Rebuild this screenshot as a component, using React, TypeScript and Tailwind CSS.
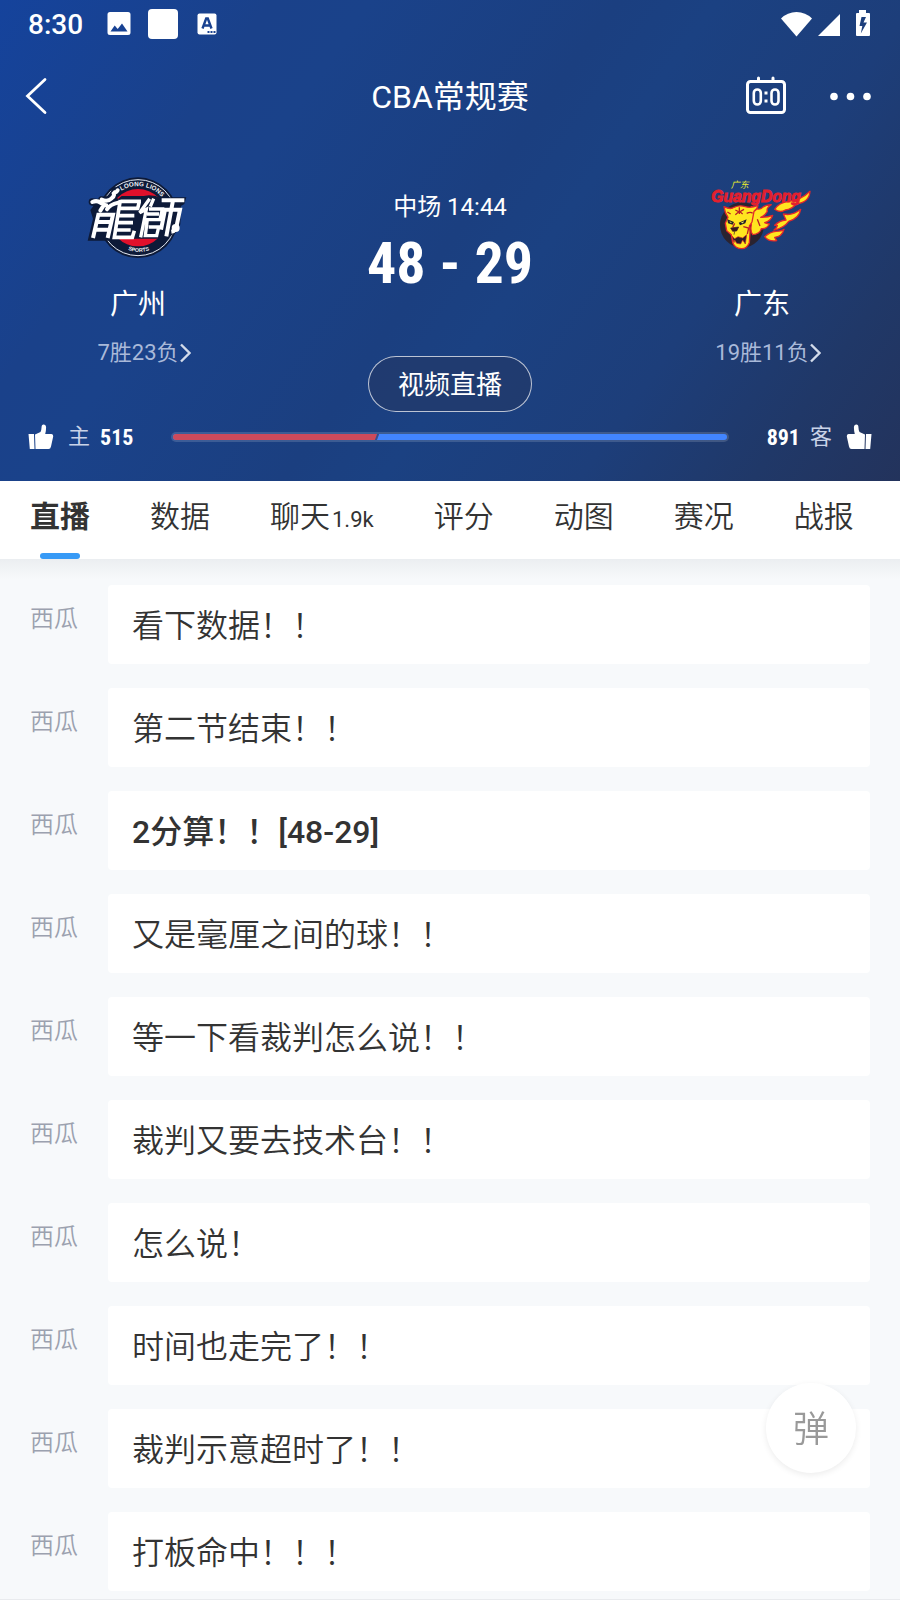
import { useState } from "react";

const tabs = [
  { label: "直播" },
  { label: "数据" },
  { label: "聊天", count: "1.9k" },
  { label: "评分" },
  { label: "动图" },
  { label: "赛况" },
  { label: "战报" },
];

const messages = [
  { id: 1, author: "西瓜", text: "看下数据！！" },
  { id: 2, author: "西瓜", text: "第二节结束！！" },
  { id: 3, author: "西瓜", text: "2分算！！[48-29]", highlight: true },
  { id: 4, author: "西瓜", text: "又是毫厘之间的球！！" },
  { id: 5, author: "西瓜", text: "等一下看裁判怎么说！！" },
  { id: 6, author: "西瓜", text: "裁判又要去技术台！！" },
  { id: 7, author: "西瓜", text: "怎么说！" },
  { id: 8, author: "西瓜", text: "时间也走完了！！" },
  { id: 9, author: "西瓜", text: "裁判示意超时了！！" },
  { id: 10, author: "西瓜", text: "打板命中！！！" },
];

const votes = { home: 515, away: 891 };

function StatusBar() {
  return (
    <div className="flex h-12 items-center justify-between pr-[30px] pl-7">
      <div className="flex items-center">
        <span className="pt-0.5 text-[28px] leading-8 font-medium">8:30</span>
        <svg className="ml-6 size-6" viewBox="0 0 24 24" fill="currentColor">
          <path
            fillRule="evenodd"
            d="M3 0h18a2.500 2.500 0 0 1 2.500 2.500v18a2.500 2.500 0 0 1-2.500 2.500H3a2.500 2.500 0 0 1-2.500-2.500v-18A2.500 2.500 0 0 1 3 0zM3.500 19.500h17l-5.500-8-4.300 5.500-3-3.500z"
          />
        </svg>
        <span className="ml-[17px] size-[30px] rounded bg-white" />
        <svg className="ml-[19px] h-[22px] w-5" viewBox="0 0 20 22">
          <rect x="0.500" y="0.500" width="19" height="21" rx="2" fill="#fff" />
          <path
            d="M5.500 15.500 9.200 5.500h1.600l3.700 10M7 12.500h6"
            fill="none"
            stroke="#1a4290"
            strokeWidth="2.400"
          />
          <path d="M10.500 18h2v2h-2zM13.500 18h2v2h-2zM16.500 18h2v2h-2z" fill="#1a4290" />
        </svg>
      </div>

      <svg className="h-7 w-[90px]" viewBox="0 0 90 28" fill="currentColor">
        <path d="M16.500 26.500 1 8.500Q7.500 2 16.500 2T32 8.500z" />
        <path d="M60 4v22H38z" />
        <path
          fillRule="evenodd"
          d="M79 0h7v3h3q1 0 1 1v21q0 1-1 1H77q-1 0-1-1V4q0-1 1-1h2zM81.500 7 79.500 16h2.800L80.800 23.500 87 12.500h-3.500L86 7z"
        />
      </svg>
    </div>
  );
}

function NavBar() {
  return (
    <div className="grid h-24 grid-cols-[1fr_auto_1fr] items-center px-6">
      <button type="button" aria-label="返回" className="size-10 justify-self-start">
        <svg viewBox="0 0 40 40" fill="none" stroke="currentColor" strokeWidth="2.800" strokeLinecap="round">
          <path d="M21 3.500 3.500 20 21 36.500" />
        </svg>
      </button>
      <h1 className="pt-0.5 text-[32px] leading-10">CBA常规赛</h1>
      <div className="flex items-center gap-10 justify-self-end">
        <button type="button" aria-label="比分" className="h-10 w-[42px]">
          <svg viewBox="1 0 42 40" fill="none" stroke="currentColor" strokeWidth="2.600">
            <rect x="2.500" y="5.500" width="37" height="31" rx="3" strokeWidth="3" />
            <path d="M13.500 2v3M28 2v3" strokeWidth="3" strokeLinecap="round" />
            <rect x="8.800" y="13.500" width="7" height="15" rx="3.500" />
            <rect x="26.500" y="13.500" width="7" height="15" rx="3.500" />
            <path d="M19.500 17h3M19.500 25h3" strokeWidth="3" />
          </svg>
        </button>
        <button type="button" aria-label="更多" className="h-10 w-12">
          <svg viewBox="0 0 48 40" fill="currentColor">
            <circle cx="6" cy="20.500" r="3.800" />
            <circle cx="22.500" cy="20.500" r="3.800" />
            <circle cx="39" cy="20.500" r="3.800" />
          </svg>
        </button>
      </div>
    </div>
  );
}

function LoongLionsLogo() {
  return (
    <svg className="h-[110px] w-[140px]" viewBox="-5 2 420 330" role="img" aria-label="Loong Lions">
      <path id="ring-title" d="M155 94A94 94 0 0 1 286 128" fill="none" />
      <path id="ring-foot" d="M175 271Q207 285 246 271" fill="none" />
      <circle cx="205" cy="175" r="121" fill="#0d1a38" />
      <circle cx="205" cy="175" r="114" fill="none" stroke="#e8ecf4" strokeWidth="3" />
      <circle cx="205" cy="175" r="86" fill="#e0102b" />
      <text fill="#f2f4f8" fontSize="19" fontWeight="700" fontFamily="Liberation Sans">
        <textPath href="#ring-title">LOONG LIONS</textPath>
      </text>
      <text fill="#f2f4f8" fontSize="16" fontWeight="700" fontFamily="Liberation Sans">
        <textPath href="#ring-foot">SPORTS</textPath>
      </text>
      <path
        d="M92 112h40l14 6 10-8h66l16-2 20 2 8 4h84l-6 20-10 6-2 54q-4 24-22 30l-16 14H132l-4 6H54l16-66-8-26z"
        fill="#0d1a38"
      />
      <g fill="none" stroke="#0d1a38" strokeWidth="22" strokeLinecap="round">
        <path d="M68 128l36 4M96 122q30 6 40-28" />
      </g>
      <g fill="none" stroke="#fff" strokeWidth="12">
        <path d="M70 236 86 166h44L114 236M82 188h38M77 211h38" />
        <path d="M68 128q14-6 24 2t18 8M96 121q18 8 30-4 12-10 4-20 8 6 14-4M112 150q8-14 34-20M102 138l-10 16" strokeLinecap="round" />
        <path d="M152 126h62M152 122 134 234h54l6-20M150 147h54l5-20M146 169h48M142 190h48M139 212h44" strokeWidth="11" />
        <path d="M240 118l-30 42 20-10-17 84M252 118l-10 24M238 149h40l-7 32h-38l-6 48h34l6-26h-30M232 164h36" strokeWidth="10" />
        <path d="M276 123h68M310 123l-20 108M283 151h48l-10 48q-2 16-16 18M286 151l-12 60" strokeWidth="12" />
      </g>
      <circle cx="318" cy="206" r="12" fill="#fff" />
    </svg>
  );
}

function GuangDongLogo() {
  return (
    <svg className="h-[110px] w-[140px]" viewBox="8 0 420 330" role="img" aria-label="GuangDong">
      <ellipse cx="158" cy="195" rx="66" ry="68" fill="#2a2330" />
      <g fill="#ffe51f" stroke="#e3272c" strokeWidth="4" strokeLinejoin="round">
        <path d="M256 148q12-20 42-24 38-4 64-30-2 34-42 38-12 16-32 18-16 10-32-2z" />
        <path d="M256 196q14-14 34-16l-8-18q28 6 52-14-4 26-36 36-14 20-44 26 10-8 10-14z" />
        <path d="M226 230q16-14 34-16 18 0 24-6-6 22-28 24l6 10q-24 4-36-12z" />
        <path d="M186 140q24 14 34 2 10-8 26-8-16 10-12 20-8 14-20 18 22 0 36-6-6 18-24 22 8 4 14 4-8 16-24 14-4 16-26 18-8-10-4-30-8-20-6-34z" />
      </g>
      <path
        d="M104 140q20 10 30 2 16-8 34-2 16 6 38-4-2 12-12 18l-6 32-8 12 2 18-2 32q-8 18-22 18-20 0-28-18l-4-24-14-12-4-22 8-18q-10-14-12-32z"
        fill="#ffe51f"
        stroke="#e3272c"
        strokeWidth="4"
        strokeLinejoin="round"
      />
      <path d="M128 228l8 8 10-6 14 4 12-10-4 28-8-12-6 12-12-2-6-10-2 8z" fill="#2a1d28" stroke="#c8222b" strokeWidth="2" />
      <path d="M114 178l20 8-4 8-14-4zM148 188l24-10-4 12-16 6z" fill="#27212b" />
      <path d="M120 184l7 3-2 3zM154 188l10-4-3 6z" fill="#e8f060" />
      <path
        d="M138 150l12 6 14-8M150 142v20M138 164l12-10 10 8M124 162l-10-6M172 160q12-6 18 0M136 190l-6 12M162 200l16 4-4 18M204 178l8 20"
        fill="none"
        stroke="#b92026"
        strokeWidth="4"
      />
      <path d="M124 204l24-3-6 12-12 1zM136 214l-2 10" fill="#3a1820" stroke="#3a1820" strokeWidth="2" />
      <text x="124" y="83" fontSize="27" fontStyle="italic" fill="#eef02a" fontFamily="Noto Sans CJK SC">
        广东
      </text>
      <text
        x="66"
        y="125"
        fontSize="47"
        fontWeight="700"
        fontStyle="italic"
        fill="#e3202e"
        stroke="#e3202e"
        strokeWidth="3"
        fontFamily="Liberation Sans"
      >
        GuangDong
      </text>
    </svg>
  );
}

function Team({ name, record, logo }: { name: string; record: string; logo: React.ReactNode }) {
  return (
    <div className="flex flex-col items-center">
      {logo}
      <p className="mt-[15px] text-[28px] leading-10">{name}</p>
      <a href="#record" className="mt-3 flex items-center pl-3 text-[22px] leading-8 text-[#a9b9d9]">
        {record}
        <svg className="h-5 w-3" viewBox="1 0 12 20" fill="none" stroke="#d3dbea" strokeWidth="2.400">
          <path d="M3 1.500 11.500 10 3 18.500" />
        </svg>
      </a>
    </div>
  );
}

function Thumb({ flip = false }: { flip?: boolean }) {
  return (
    <svg className={flip ? "size-[26px] -scale-x-100" : "size-[26px]"} viewBox="0 0 26 26" fill="currentColor">
      <path d="M0.500 10h5.500l0.500 15H1.800zM7 10.500 12.500 8q1-2 1.200-6 0.300-1.600 1.800-1.500 2.500 0.200 2.600 3 0 3-0.900 6.500h6.300q2 0.200 1.700 2.500L23 22.500q-0.500 2.500-2.500 2.500H7.500z" />
    </svg>
  );
}

function VoteBar() {
  const homeShare = (votes.home / (votes.home + votes.away)) * 100;

  return (
    <div className="flex h-8 items-center px-7">
      <button type="button" className="flex items-center">
        <Thumb />
        <span className="ml-3.5 text-[22px] leading-8 text-[#c9d3e8]">主</span>
        <span className="ml-2.5 pt-0.5 font-['Roboto_Condensed',sans-serif] text-[22px] leading-8 font-bold">
          {votes.home}
        </span>
      </button>
      <div className="mx-[38px] flex-1 rounded-full bg-white/15 p-0.5">
        <div className="flex h-1.5 overflow-hidden rounded-full bg-[#4285ff]">
          <div className="bg-[#cc4a5b]" style={{ width: `${homeShare}%` }} />
          <div className="-ml-0.5 w-1 -skew-x-[20deg] border-r-2 border-[#2d4f95] bg-[#cc4a5b]" />
        </div>
      </div>
      <button type="button" className="flex items-center">
        <span className="mr-2.5 pt-0.5 font-['Roboto_Condensed',sans-serif] text-[22px] leading-8 font-bold">
          {votes.away}
        </span>
        <span className="mr-3.5 text-[22px] leading-8 text-[#c9d3e8]">客</span>
        <Thumb flip />
      </button>
    </div>
  );
}

export default function App() {
  const [active, setActive] = useState("直播");

  return (
    <div className="min-h-screen border-b border-[#e9ebee] bg-[#f7f9fb] pb-2 font-['Roboto','Noto_Sans_CJK_SC',sans-serif] text-[#333]">
      <header className="bg-[linear-gradient(125deg,#15439c_0%,#1a418a_22%,#1a428a_30%,#1b3f80_50%,#1b4182_58%,#1d3e7a_74%,#203868_88%,#23335c_100%)] pb-7 text-white">
        <StatusBar />
        <NavBar />

        <div className="grid grid-cols-[276px_1fr_276px] pt-4">
          <Team name="广州" record="7胜23负" logo={<LoongLionsLogo />} />
          <div className="flex flex-col items-center pt-[31px]">
            <p className="text-2xl leading-8">中场 14:44</p>
            <div className="mt-2 flex gap-3.5 font-['Roboto_Condensed',sans-serif] text-[58px] leading-[64px] font-bold">
              <span>48</span>
              <span>-</span>
              <span>29</span>
            </div>
            <button
              type="button"
              className="mt-[61px] h-14 rounded-full border border-white/70 bg-[#223a6c]/80 px-[29px] pt-0.5 text-[26px] leading-8"
            >
              视频直播
            </button>
          </div>
          <Team name="广东" record="19胜11负" logo={<GuangDongLogo />} />
        </div>

        <div className="pt-[9px]">
          <VoteBar />
        </div>
      </header>

      <nav className="flex gap-[60px] bg-white px-[30px]">
        {tabs.map((tab) => (
          <button
            key={tab.label}
            type="button"
            onClick={() => setActive(tab.label)}
            className="flex h-[78px] flex-col items-center justify-between pt-4"
          >
            <span
              className={
                tab.label === active
                  ? "text-[30px] leading-10 font-bold whitespace-nowrap"
                  : "text-[30px] leading-10 font-[350] whitespace-nowrap"
              }
            >
              {tab.label}
              {tab.count && <span className="ml-0.5 text-[22px] font-normal">{tab.count}</span>}
            </span>
            {tab.label === active && <span className="h-1.5 w-10 rounded-full bg-[#379af6]" />}
          </button>
        ))}
      </nav>

      <main className="bg-[linear-gradient(#ebeef1,#f7f9fb_20px)] pt-[26px]">
        <ul className="flex flex-col gap-6 px-[30px]">
          {messages.map((m) => (
            <li key={m.id} className="flex items-start gap-[30px]">
              <span className="pt-[18px] text-2xl leading-8 font-[350] text-[#9ba1af]">{m.author}</span>
              <p
                className={`flex-1 rounded bg-white px-6 pt-[21px] pb-[18px] text-[32px] leading-10 ${
                  m.highlight ? "font-medium" : "font-[350]"
                }`}
              >
                {m.text}
              </p>
            </li>
          ))}
        </ul>
      </main>

      <button
        type="button"
        className="fixed right-11 bottom-[127px] size-[90px] rounded-full bg-white pt-1 text-[36px] font-[350] text-[#999] shadow-[0_2px_6px_rgba(0,0,0,0.08)]"
      >
        弹
      </button>
    </div>
  );
}
